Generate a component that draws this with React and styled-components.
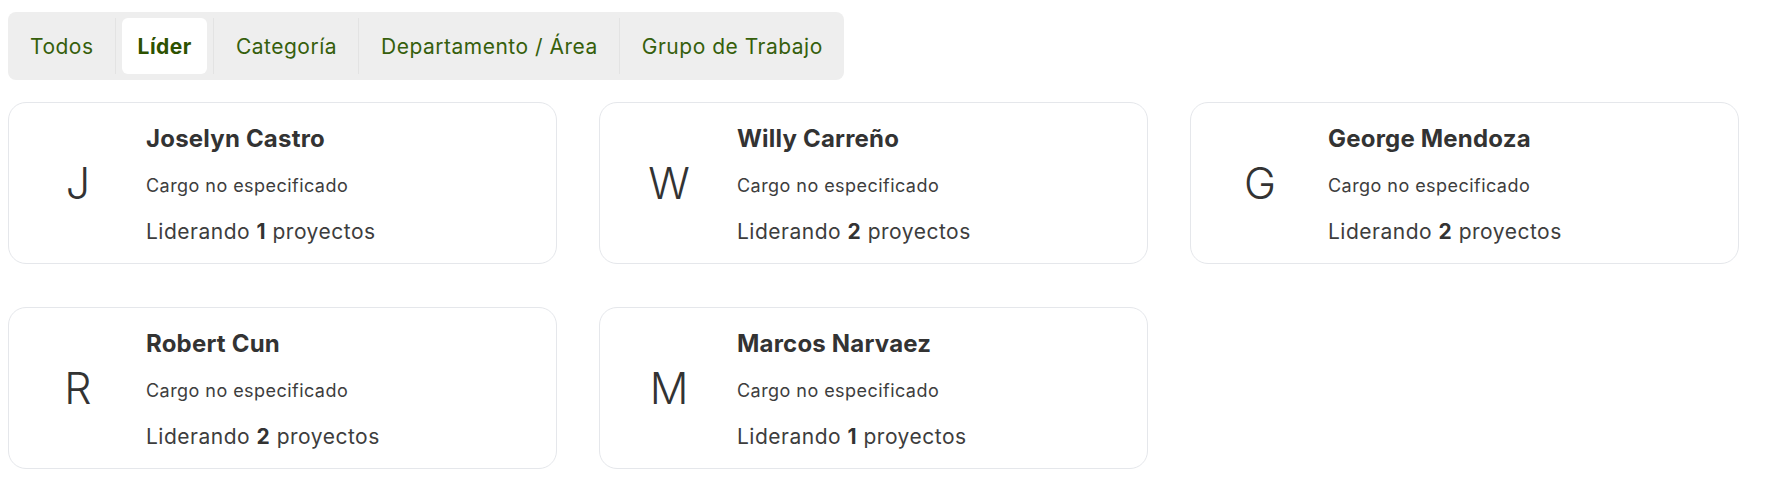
import React, { useState } from "react";
import styled, { createGlobalStyle } from "styled-components";

const GlobalStyle = createGlobalStyle`
  body {
    margin: 0;
    background: #ffffff;
    font-family: Inter, "Open Sans", sans-serif;
  }
`;

const Page = styled.div`
  padding: 12px 8px;
`;

const TabBar = styled.nav`
  display: inline-flex;
  align-items: center;
  padding: 6px;
  background-color: #eeeeee;
  border-radius: 8px;
`;

const TabSlot = styled.div`
  display: flex;
  padding: 0 6px;
  border-left: 1px solid #e3e3e3;
  &:first-child {
    border-left: none;
    padding-left: 0;
  }
  &:last-child {
    padding-right: 0;
  }
`;

const Tab = styled.button`
  height: 56px;
  padding: 0 15px 0 16px;
  border: none;
  border-radius: 6px;
  background-color: ${(p) => (p.$active ? "#ffffff" : "transparent")};
  color: ${(p) => (p.$active ? "#2d5200" : "#365f0c")};
  font-family: Inter, "Open Sans", sans-serif;
  font-size: 21px;
  letter-spacing: 0.5px;
  font-weight: ${(p) => (p.$active ? 700 : 400)};
  cursor: pointer;
`;

const Grid = styled.section`
  display: grid;
  grid-template-columns: repeat(3, 1fr);
  column-gap: 42px;
  row-gap: 43px;
  width: 1731px;
  margin-top: 22px;
`;

const Card = styled.article`
  display: flex;
  align-items: center;
  box-sizing: border-box;
  height: 162px;
  padding: 0 24px;
  background: #ffffff;
  border: 1px solid #e5e7eb;
  border-radius: 18px;
`;

const Avatar = styled.div`
  flex: none;
  width: 90px;
  text-align: center;
  font-size: 43px;
  font-weight: 300;
  color: #333333;
`;

const Info = styled.div`
  align-self: flex-start;
  margin-left: 23px;
  padding-top: 21px;
`;

const Name = styled.h3`
  margin: 0;
  font-size: 24px;
  line-height: 30px;
  font-weight: 700;
  letter-spacing: 0.2px;
  color: #333333;
`;

const Role = styled.p`
  margin: 20px 0 0;
  font-size: 18px;
  line-height: 24px;
  letter-spacing: 0.45px;
  color: #3d3d3d;
`;

const Lead = styled.p`
  margin: 21px 0 0;
  font-size: 21px;
  line-height: 26px;
  letter-spacing: 0.5px;
  color: #3d3d3d;
  b {
    color: #333333;
  }
`;

const tabs = ["Todos", "Líder", "Categoría", "Departamento / Área", "Grupo de Trabajo"];

const leaders = [
  { name: "Joselyn Castro", projects: 1 },
  { name: "Willy Carreño", projects: 2 },
  { name: "George Mendoza", projects: 2 },
  { name: "Robert Cun", projects: 2 },
  { name: "Marcos Narvaez", projects: 1 },
];

function App() {
  const [active, setActive] = useState("Líder");

  return (
    <Page>
      <GlobalStyle />
      <TabBar>
        {tabs.map((t) => (
          <TabSlot key={t}>
            <Tab $active={t === active} onClick={() => setActive(t)}>
              {t}
            </Tab>
          </TabSlot>
        ))}
      </TabBar>
      <Grid>
        {leaders.map((l) => (
          <Card key={l.name}>
            <Avatar>{l.name.charAt(0)}</Avatar>
            <Info>
              <Name>{l.name}</Name>
              <Role>Cargo no especificado</Role>
              <Lead>
                Liderando <b>{l.projects}</b> proyectos
              </Lead>
            </Info>
          </Card>
        ))}
      </Grid>
    </Page>
  );
}

export default App;
